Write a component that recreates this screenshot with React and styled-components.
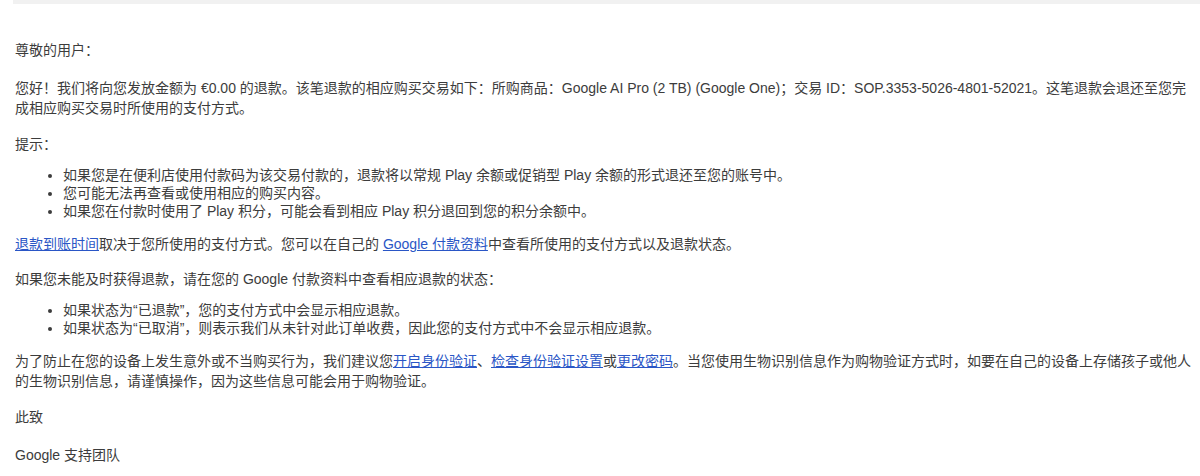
import React from "react";
import styled, { createGlobalStyle } from "styled-components";

const Global = createGlobalStyle`
  body {
    margin: 0;
    background: #fff;
    font-family: "Liberation Sans", Arial, "Noto Sans CJK SC", sans-serif;
  }
`;

const TopBar = styled.div`
  height: 4px;
  margin-left: 13px;
  background: #f1f1f1;
`;

const Mail = styled.div`
  padding: 36px 8px 0 15px;
  color: #3c3c3c;
  font-size: 14px;
  line-height: 20px;
`;

const P = styled.p`
  margin: 0 0 ${p => p.gap || 16}px;
`;

const List = styled.ul`
  margin: 0 0 14px;
  padding-left: 48px;
  line-height: 18px;
  li { margin: 0; }
`;

const A = styled.a`
  color: #2a56c6;
  text-decoration: underline;
`;

export default function App() {
  return (
    <>
      <Global />
      <TopBar />
      <Mail>
        <P gap={18}>尊敬的用户：</P>
        <P>
          您好！我们将向您发放金额为 €0.00 的退款。该笔退款的相应购买交易如下：所购商品：Google AI Pro (2 TB) (Google One)；交易 ID：SOP.3353-5026-4801-52021。这笔退款会退还至您完成相应购买交易时所使用的支付方式。
        </P>
        <P gap={12}>提示：</P>
        <List>
          <li>如果您是在便利店使用付款码为该交易付款的，退款将以常规 Play 余额或促销型 Play 余额的形式退还至您的账号中。</li>
          <li>您可能无法再查看或使用相应的购买内容。</li>
          <li>如果您在付款时使用了 Play 积分，可能会看到相应 Play 积分退回到您的积分余额中。</li>
        </List>
        <P gap={15}>
          <A href="#">退款到账时间</A>取决于您所使用的支付方式。您可以在自己的 <A href="#">Google 付款资料</A>中查看所使用的支付方式以及退款状态。
        </P>
        <P gap={12}>如果您未能及时获得退款，请在您的 Google 付款资料中查看相应退款的状态：</P>
        <List>
          <li>如果状态为“已退款”，您的支付方式中会显示相应退款。</li>
          <li>如果状态为“已取消”，则表示我们从未针对此订单收费，因此您的支付方式中不会显示相应退款。</li>
        </List>
        <P>
          为了防止在您的设备上发生意外或不当购买行为，我们建议您<A href="#">开启身份验证</A>、<A href="#">检查身份验证设置</A>或<A href="#">更改密码</A>。当您使用生物识别信息作为购物验证方式时，如要在自己的设备上存储孩子或他人的生物识别信息，请谨慎操作，因为这些信息可能会用于购物验证。
        </P>
        <P gap={18}>此致</P>
        <P>Google 支持团队</P>
      </Mail>
    </>
  );
}
